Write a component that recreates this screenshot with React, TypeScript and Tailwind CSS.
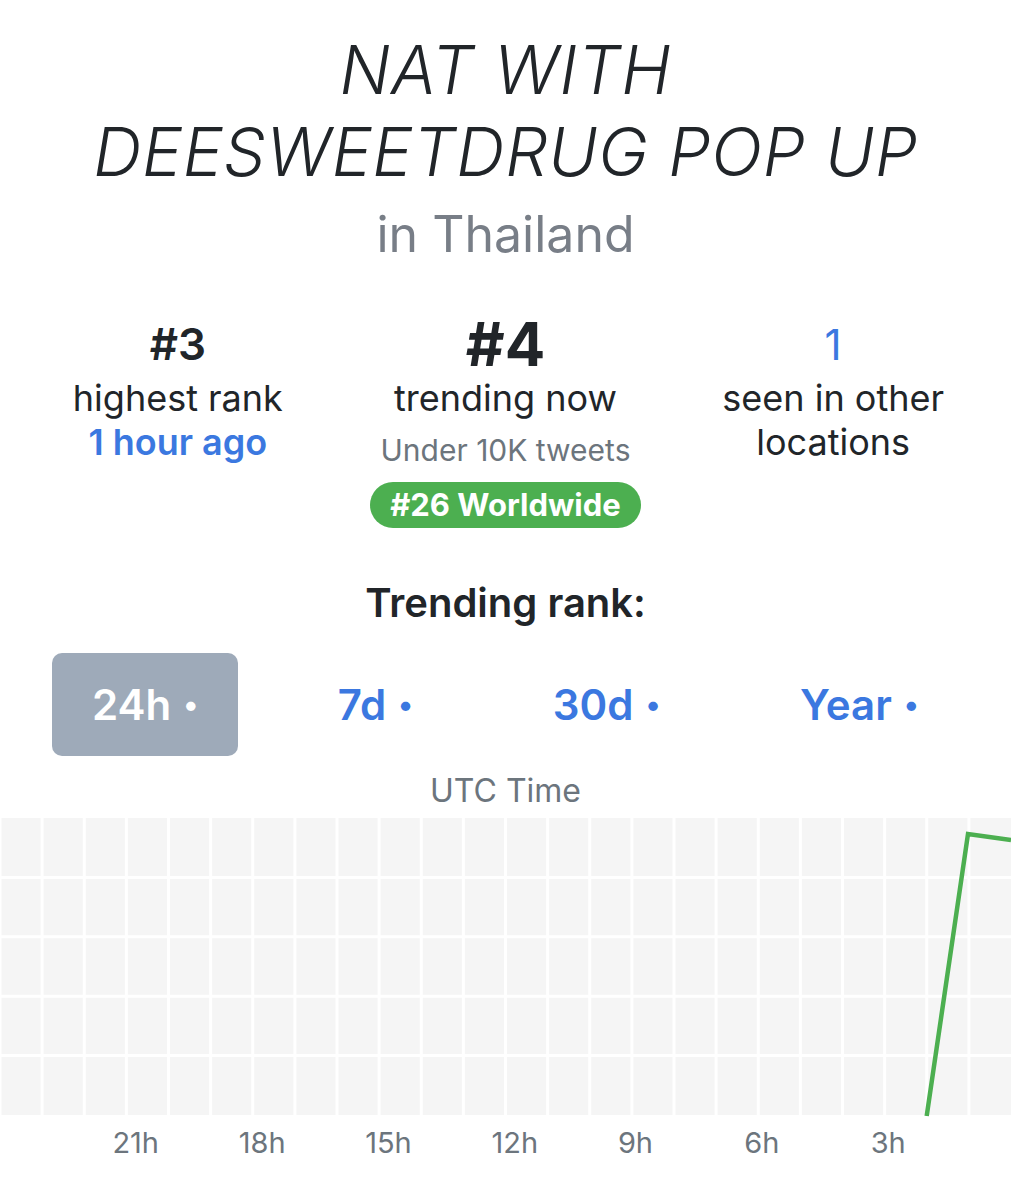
import React from "react";

const COL = 1011 / 24;
const ROW = 59.4;
const TICKS = ["21h", "18h", "15h", "12h", "9h", "6h", "3h"];
const TABS = ["24h", "7d", "30d", "Year"];

function RankChart() {
  const h = ROW * 5;
  return (
    <svg width={1011} height={360} viewBox="0 0 1011 360" className="block">
      <rect x={0} y={0} width={1011} height={h} fill="#f5f5f5" />
      {Array.from({ length: 24 }).map((_, i) => (
        <line key={"v" + i} x1={i * COL} x2={i * COL} y1={0} y2={h} stroke="#ffffff" strokeWidth={3} />
      ))}
      {Array.from({ length: 4 }).map((_, i) => (
        <line key={"h" + i} x1={0} x2={1011} y1={(i + 1) * ROW} y2={(i + 1) * ROW} stroke="#ffffff" strokeWidth={3} />
      ))}
      <polyline
        points="926.7,298 968,16 1011,22"
        fill="none"
        stroke="#4caf50"
        strokeWidth={4.5}
        strokeLinejoin="miter"
      />
      {TICKS.map((t, i) => (
        <text
          key={t}
          x={(i + 1) * 3 * COL - 14}
          y={335}
          fontSize={29}
          fill="#6c757d"
          fontFamily="Inter, sans-serif"
        >
          {t}
        </text>
      ))}
    </svg>
  );
}

export default function App() {
  return (
    <div className="w-[1011px] h-[1200px] overflow-hidden bg-white font-['Inter',sans-serif] text-[#212529]">
      <h1 className="pt-[29px] text-center text-[67px] leading-[82px] font-light italic tracking-[0.7px]">
        NAT WITH
        <br />
        DEESWEETDRUG POP UP
      </h1>
      <p className="mt-[10px] text-center text-[50px] leading-[62px] text-[#787e87]">in Thailand</p>

      <div className="mt-[47px] grid grid-cols-3 px-[14px] text-center">
        <div className="flex flex-col items-center">
          <div className="h-[64px] flex items-center text-[44px] font-semibold">#3</div>
          <div className="text-[36px] leading-[44px]">highest rank</div>
          <div className="text-[36px] leading-[44px] font-semibold text-[#3b78e0]">1 hour ago</div>
        </div>
        <div className="flex flex-col items-center">
          <div className="h-[64px] flex items-center text-[60px] font-bold">#4</div>
          <div className="text-[36px] leading-[44px]">trending now</div>
          <div className="mt-[10px] text-[30px] leading-[40px] text-[#6c757d]">Under 10K tweets</div>
          <div className="mt-[12px] h-[46px] px-[20px] flex items-center rounded-full bg-[#4caf50] text-[31px] font-bold text-white">
            #26 Worldwide
          </div>
        </div>
        <div className="flex flex-col items-center">
          <div className="h-[64px] flex items-center text-[42px] text-[#3b78e0]">1</div>
          <div className="text-[36px] leading-[44px]">seen in other</div>
          <div className="text-[36px] leading-[44px]">locations</div>
        </div>
      </div>

      <h2 className="mt-[51px] text-center text-[40px] leading-[48px] font-semibold">Trending rank:</h2>

      <div className="mt-[26px] px-[52px] flex justify-between">
        {TABS.map((t, i) => (
          <div
            key={t}
            className={
              i === 0
                ? "h-[103px] px-[40px] flex items-center rounded-[10px] bg-[#9eaab9] text-white text-[42px] font-semibold"
                : "h-[103px] px-[40px] flex items-center text-[#3b78e0] text-[42px] font-semibold"
            }
          >
            {t}
            <span className="ml-[12px] text-[30px]">•</span>
          </div>
        ))}
      </div>

      <div className="mt-[17px] text-center text-[32px] leading-[36px] text-[#6c757d]">UTC Time</div>

      <div className="mt-[9px]">
        <RankChart />
      </div>
    </div>
  );
}
